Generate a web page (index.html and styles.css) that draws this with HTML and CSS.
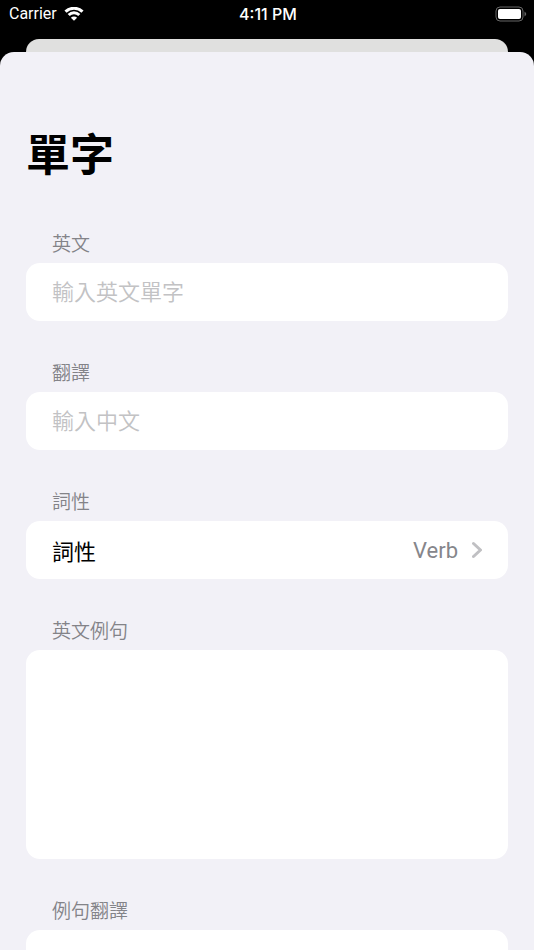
FILE: index.html
```html
<!DOCTYPE html>
<html lang="zh-Hant">
<head>
  <meta charset="UTF-8">
  <meta name="viewport" content="width=device-width, initial-scale=1.0">
  <title>單字</title>
  <link rel="stylesheet" href="styles.css">
</head>
<body>
  <header class="status-bar">
    <div class="carrier">
      <span>Carrier</span>
      <svg class="wifi" viewBox="0 0 20 15" aria-hidden="true">
        <path d="M1.5 4.7 A12.2 12.2 0 0 1 18.5 4.7" />
        <path d="M4.7 8 A7.6 7.6 0 0 1 15.3 8" />
        <path class="dot" d="M10 13.7 L6.9 10.7 A4.4 4.4 0 0 1 13.1 10.7 Z" />
      </svg>
    </div>
    <time class="clock">4:11 PM</time>
    <svg class="battery" viewBox="0 0 32 16" aria-hidden="true">
      <rect class="case" x="1" y="1" width="27" height="14" rx="4" />
      <rect class="level" x="3" y="3" width="23" height="10" rx="2" />
      <path class="tip" d="M29.5 5.5 Q33 8 29.5 10.5 Z" />
    </svg>
  </header>

  <div class="back-sheet"></div>

  <main class="sheet">
    <h1>單字</h1>
    <form class="word-form">
      <div class="field">
        <label for="english">英文</label>
        <input class="card" type="text" id="english" name="english" placeholder="輸入英文單字">
      </div>

      <div class="field">
        <label for="translation">翻譯</label>
        <input class="card" type="text" id="translation" name="translation" placeholder="輸入中文">
      </div>

      <div class="field">
        <h2>詞性</h2>
        <div class="card row">
          <label for="part">詞性</label>
          <select id="part" name="part">
            <option>Verb</option>
          </select>
          <svg class="chevron" viewBox="0 0 10 18" aria-hidden="true">
            <path d="M1.5 2.5 L8.5 9 L1.5 15.5" />
          </svg>
        </div>
      </div>

      <div class="field">
        <label for="example">英文例句</label>
        <textarea class="card" id="example" name="example"></textarea>
      </div>

      <div class="field">
        <label for="example-translation">例句翻譯</label>
        <textarea class="card" id="example-translation" name="example-translation"></textarea>
      </div>
    </form>
  </main>
</body>
</html>
```

FILE: styles.css
```css
* {
  box-sizing: border-box;
}
body {
  margin: 0;
  height: 100vh;
  display: flex;
  flex-direction: column;
  overflow: hidden;
  background-color: #000;
  font-family: Inter, "Noto Sans CJK TC", sans-serif;
}

/* status bar */
.status-bar {
  display: grid;
  grid-template-columns: 1fr auto 1fr;
  align-items: center;
  flex: none;
  height: 39px;
  padding: 0 7px 11px 9px;
  color: #fff;
  font-size: 16px;
  line-height: 28px;
}
.carrier {
  display: flex;
  align-items: center;
  gap: 7px;
  font-family: Roboto, sans-serif;
}
.wifi {
  width: 20px;
  height: 15px;
  fill: none;
  stroke: #fff;
  stroke-width: 3;
}
.wifi .dot {
  fill: #fff;
  stroke: none;
}
.clock {
  font-weight: 500;
}
.battery {
  justify-self: end;
  width: 32px;
  height: 16px;
}
.battery .case {
  fill: none;
  stroke: #666;
}
.battery .level {
  fill: #fff;
}
.battery .tip {
  fill: #666;
}

/* sheets */
.back-sheet {
  flex: none;
  height: 13px;
  margin: 0 26px;
  border-radius: 13px 13px 0 0;
  background-color: #e0e0df;
}
.sheet {
  flex: 1;
  min-height: 0;
  overflow-y: auto;
  scrollbar-width: none;
  padding: 71px 26px 26px;
  border-radius: 14px 14px 0 0;
  background-color: #f2f1f7;
}
h1 {
  margin: 0 0 36px;
  font-size: 44px;
  line-height: 64px;
  font-weight: 600;
}

/* form */
.word-form {
  display: flex;
  flex-direction: column;
  gap: 31px;
}
.field > label,
.field > h2 {
  display: block;
  margin: 0;
  padding: 4px 26px 0;
  color: #838388;
  font-size: 19px;
  line-height: 36px;
  font-weight: 350;
}
.card {
  display: block;
  width: 100%;
  height: 58px;
  margin: 0;
  padding: 0 26px;
  border: none;
  border-radius: 14px;
  background-color: #fff;
  color: #000;
  font-family: inherit;
  font-size: 22px;
}
.card::placeholder {
  color: #c2c2c4;
  font-weight: 350;
  opacity: 1;
}
textarea.card {
  height: 209px;
  padding: 14px 26px;
  resize: none;
}
.row {
  display: flex;
  align-items: center;
}
.row select {
  flex: 1;
  appearance: none;
  margin: 0 14px 0 0;
  padding: 0;
  border: none;
  background: none;
  color: #86868b;
  font-family: Roboto, sans-serif;
  font-size: 22px;
  text-align-last: right;
}
.chevron {
  width: 10px;
  height: 18px;
  fill: none;
  stroke: #c0c0c3;
  stroke-width: 3;
  stroke-linecap: round;
  stroke-linejoin: round;
}
```
